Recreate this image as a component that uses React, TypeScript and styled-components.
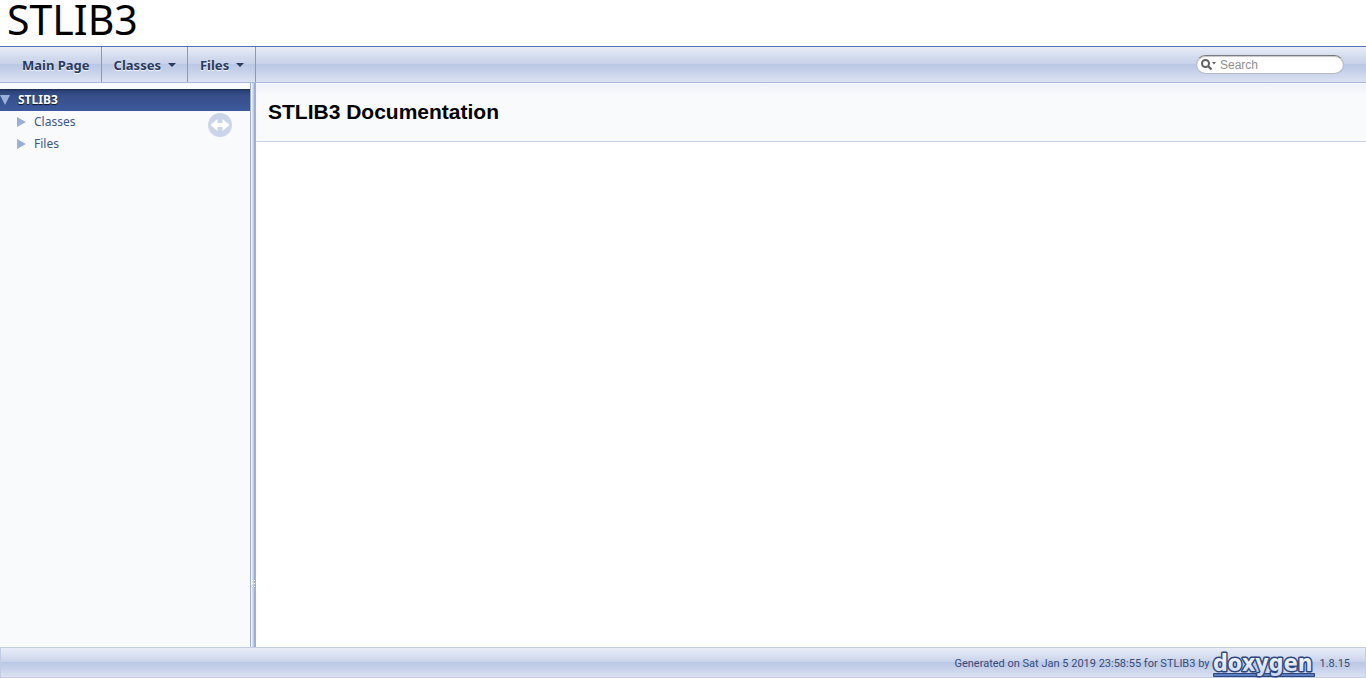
import React from "react";
import styled, { createGlobalStyle } from "styled-components";

const Global = createGlobalStyle`
  *, *::before, *::after { box-sizing: border-box; }
  body { margin: 0; background: #fff; color: #000; font-family: "Liberation Sans", Arial, sans-serif; }
`;

const bar = `linear-gradient(#e8edf7 0, #d3dbed 10px, #c8d2e9 48%, #bbc8e5 50%, #c3cee8 65%, #dbe2f2 100%)`;

const Page = styled.div`
  display: flex;
  flex-direction: column;
  min-height: 100vh;
`;

const Title = styled.div`
  height: 46px;
  padding-left: 7px;
  font: 41px/38px "Noto Sans", sans-serif;
`;

const Nav = styled.nav`
  display: flex;
  align-items: center;
  height: 37px;
  padding: 0 22px 0 10px;
  border-top: 1px solid #5070b8;
  border-bottom: 1px solid #a9b8dc;
  background: ${bar};
`;

const Menu = styled.ul`
  display: flex;
  align-self: stretch;
  flex: 1;
  margin: 0;
  padding: 0;
  list-style: none;
`;

const MenuItem = styled.li`
  display: flex;
  border-right: 1px solid #8299cd;
`;

const MenuLink = styled.a`
  display: flex;
  align-items: center;
  gap: 7px;
  padding: 0 11px 0 12px;
  color: #283a5d;
  font: bold 13px/20px "Noto Sans", sans-serif;
  text-decoration: none;
  text-shadow: 0 1px 1px rgba(255, 255, 255, 0.9);
`;

const Search = styled.label`
  display: flex;
  align-items: center;
  gap: 3px;
  width: 148px;
  height: 19px;
  padding: 0 8px 0 4px;
  border: 1px solid #b5b9c2;
  border-top-color: #77797e;
  border-radius: 10px;
  background: #fff;
  box-shadow: inset 0 1px 1px #c6c6c6;
`;

const SearchIcon = styled.svg`
  flex: none;
`;

const SearchInput = styled.input`
  flex: 1;
  min-width: 0;
  padding: 0;
  border: 0;
  outline: 0;
  background: none;
  color: #909090;
  font: 12px/16px "Liberation Sans", Arial, sans-serif;
  &::placeholder { color: #909090; opacity: 1; }
`;

const Body = styled.div`
  display: flex;
  flex: 1;
`;

const Sidebar = styled.aside`
  position: relative;
  width: 250px;
  padding-top: 6px;
  background: #f9fafc;
`;

const Tree = styled.ul`
  margin: 0;
  padding: 0;
  list-style: none;
`;

const TreeRow = styled.a<{ $selected?: boolean }>`
  display: flex;
  align-items: center;
  gap: 8px;
  height: 22px;
  padding-left: ${(p) => (p.$selected ? 0 : 16)}px;
  background: ${(p) => (p.$selected ? "linear-gradient(#1f2c4b 0, #2c4277 2px, #364f8b 7px, #3d5a9c 100%)" : "none")};
  color: ${(p) => (p.$selected ? "#fff" : "#3d578c")};
  font: ${(p) => (p.$selected ? "bold" : "normal")} 12px/22px "Noto Sans", sans-serif;
  text-decoration: none;
  text-shadow: ${(p) => (p.$selected ? "0 1px 1px rgba(0, 0, 0, 0.8)" : "none")};
`;

const SyncButton = styled.button`
  position: absolute;
  top: 30px;
  right: 18px;
  display: flex;
  padding: 0;
  border: 0;
  background: none;
`;

const Splitter = styled.div`
  display: flex;
  align-items: flex-end;
  width: 6px;
  padding: 0 0 59px 2px;
  background: linear-gradient(90deg, #9bafd9 0 1px, #f3f6fb 1px 2px, #d6deef 2px 3px, #c3cfe7 3px 4px, #9bafd9 4px 6px);
`;

const Main = styled.main`
  flex: 1;
`;

const Header = styled.header`
  height: 59px;
  padding: 16px 12px;
  border-bottom: 1px solid #c4cfe5;
  background: linear-gradient(#fff 0 1px, #edf1f8 1px, #f9fafc 12px);
`;

const Heading = styled.h1`
  margin: 0;
  font-size: 21px;
  line-height: 26px;
`;

const Footer = styled.footer`
  display: flex;
  align-items: center;
  justify-content: flex-end;
  gap: 3px;
  height: 31px;
  padding: 3px 15px 0 15px;
  border: 1px solid #c2cce4;
  background: ${bar};
  color: #354c7b;
  font: 11px/16px Roboto, sans-serif;
`;

const LogoLink = styled.a`
  display: flex;
`;

const Arrow = ({ open }: { open?: boolean }) => (
  <svg width="10" height="10" viewBox="0 0 10 10" aria-hidden="true">
    <path d={open ? "M0 0H10L5 10Z" : "M1 0L10 5L1 10Z"} fill="#9cafd9" />
  </svg>
);

const Caret = () => (
  <svg width="8" height="4" viewBox="0 0 8 4" aria-hidden="true">
    <path d="M0 0H8L4 4Z" fill="#283a5d" />
  </svg>
);

export default function App() {
  return (
    <Page>
      <Global />
      <Title>STLIB3</Title>
      <Nav>
        <Menu>
          <MenuItem><MenuLink href="#">Main Page</MenuLink></MenuItem>
          <MenuItem><MenuLink href="#classes">Classes<Caret /></MenuLink></MenuItem>
          <MenuItem><MenuLink href="#files">Files<Caret /></MenuLink></MenuItem>
        </Menu>
        <Search>
          <SearchIcon width="16" height="13" viewBox="0 0 16 13" aria-hidden="true">
            <circle cx="4.500" cy="5.500" r="3.500" fill="none" stroke="#606060" strokeWidth="2" />
            <path d="M7 8L10.500 11.500" stroke="#606060" strokeWidth="2.200" />
            <path d="M11 4H15L13 6.500Z" fill="#606060" />
          </SearchIcon>
          <SearchInput type="text" placeholder="Search" aria-label="Search" />
        </Search>
      </Nav>
      <Body>
        <Sidebar>
          <Tree>
            <li>
              <TreeRow $selected href="#"><Arrow open />STLIB3</TreeRow>
              <Tree>
                <li><TreeRow href="#classes"><Arrow />Classes</TreeRow></li>
                <li><TreeRow href="#files"><Arrow />Files</TreeRow></li>
              </Tree>
            </li>
          </Tree>
          <SyncButton type="button" aria-label="Synchronise navigation">
            <svg width="24" height="24" viewBox="0 0 24 24" aria-hidden="true">
              <circle cx="12" cy="12" r="12" fill="#cbd5ea" />
              <path d="M2.500 12L9.500 6V10H14.500V6L21.500 12L14.500 18V14H9.500V18Z" fill="#fff" />
            </svg>
          </SyncButton>
        </Sidebar>
        <Splitter>
          <svg width="4" height="8" viewBox="0 0 4 8" aria-hidden="true">
            <path d="M0 .5H4M0 3.500H4M0 6.500H4" stroke="#fff" strokeDasharray="1 1" />
          </svg>
        </Splitter>
        <Main>
          <Header><Heading>STLIB3 Documentation</Heading></Header>
        </Main>
      </Body>
      <Footer>
        <span>Generated on Sat Jan 5 2019 23:58:55 for STLIB3 by</span>
        <LogoLink href="#doxygen" aria-label="doxygen">
          <svg width="104" height="28" viewBox="0 0 104 28">
            <defs>
              <linearGradient id="letters" x1="0" y1="0" x2="0" y2="1">
                <stop offset="0" stopColor="#fff" />
                <stop offset="1" stopColor="#cbd8f0" />
              </linearGradient>
            </defs>
            <path d="M1.500 23.500H102.500V26.500H1.500Z" fill="#5c7fc4" stroke="#2c467e" />
            <text x="1" y="21" fontFamily="DejaVu Sans Condensed, DejaVu Sans, sans-serif" fontWeight="bold" fontSize="23" fill="url(#letters)" stroke="#2c467e" strokeWidth="3" strokeLinejoin="round" paintOrder="stroke">doxygen</text>
          </svg>
        </LogoLink>
        <span>1.8.15</span>
      </Footer>
    </Page>
  );
}
